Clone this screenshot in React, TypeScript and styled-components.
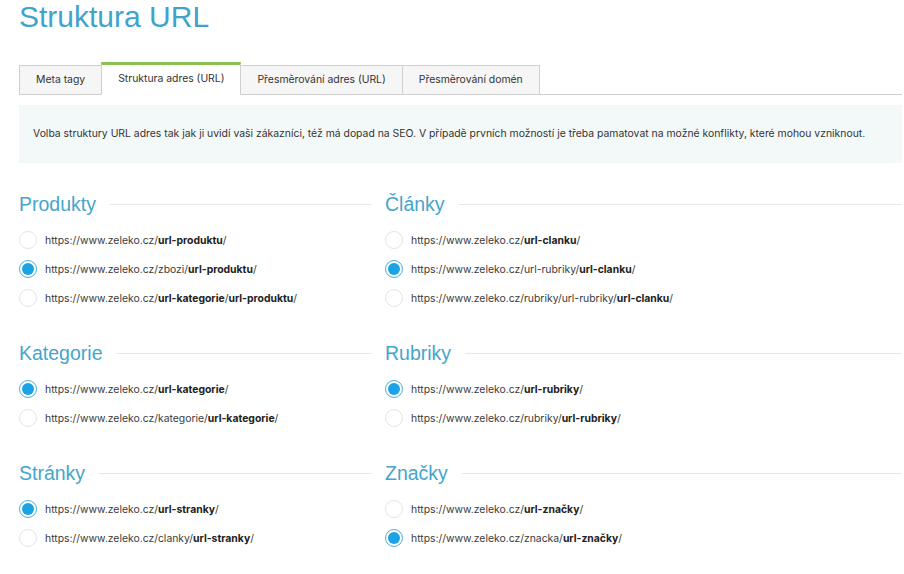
import React from "react";
import styled, { createGlobalStyle } from "styled-components";

const Global = createGlobalStyle`
  html, body { margin: 0; padding: 0; background: #fff; }
  body { font-family: Inter, "Noto Sans", sans-serif; color: #333; }
`;

const Page = styled.div`
  width: 883px;
  padding-left: 19px;
`;

const Title = styled.h1`
  margin: 0;
  font-family: "Liberation Sans", Arial, sans-serif;
  font-weight: 400;
  font-size: 30px;
  line-height: 34px;
  color: #3fa3cb;
`;

const TabBar = styled.div`
  display: flex;
  align-items: flex-end;
  margin-top: 28px;
  border-bottom: 1px solid #cfcfcf;
`;

const Tab = styled.div<{ $active?: boolean }>`
  box-sizing: border-box;
  margin-bottom: -1px;
  margin-left: -1px;
  &:first-child { margin-left: 0; }
  padding: 0 16px;
  height: ${(p) => (p.$active ? "33px" : "30px")};
  line-height: 28px;
  font-size: 10.4px;
  color: #333;
  white-space: nowrap;
  background: ${(p) => (p.$active ? "#fff" : "#f6f6f6")};
  border: 1px solid #cfcfcf;
  border-top: ${(p) => (p.$active ? "3px solid #8cc152" : "1px solid #cfcfcf")};
  border-bottom-color: ${(p) => (p.$active ? "#fff" : "#cfcfcf")};
  position: relative;
  z-index: ${(p) => (p.$active ? 1 : 0)};
`;

const Info = styled.div`
  margin-top: 10px;
  background: #f3f9f9;
  padding: 21px 14px;
  font-size: 10.4px;
  line-height: 16px;
  color: #333;
  white-space: nowrap;
`;

const Columns = styled.div`
  display: grid;
  grid-template-columns: 353px 1fr;
  column-gap: 13px;
  margin-top: 29px;
`;

const Column = styled.div`
  display: flex;
  flex-direction: column;
  gap: 34px;
`;

const Section = styled.section`
  display: flex;
  flex-direction: column;
`;

const HeadingRow = styled.div`
  display: flex;
  align-items: center;
  gap: 14px;
  height: 24px;
  margin-bottom: 15px;
  &::after {
    content: "";
    flex: 1;
    height: 1px;
    background: #e6e9ea;
  }
`;

const Heading = styled.h2`
  margin: 0;
  font-family: "Liberation Sans", Arial, sans-serif;
  font-weight: 400;
  font-size: 19.5px;
  line-height: 24px;
  color: #45a5cc;
`;

const Options = styled.div`
  display: flex;
  flex-direction: column;
  gap: 11px;
`;

const Option = styled.label`
  display: flex;
  align-items: center;
  gap: 8px;
  height: 18px;
  font-size: 10.4px;
  color: #3a3a3a;
  cursor: pointer;
  b { font-weight: 700; color: #222; }
`;

const Radio = styled.span<{ $checked?: boolean }>`
  box-sizing: border-box;
  width: 18px;
  height: 18px;
  border-radius: 50%;
  flex: none;
  background: #fff;
  border: 1px solid ${(p) => (p.$checked ? "#4bb0dc" : "#e2e4e6")};
  display: flex;
  align-items: center;
  justify-content: center;
  &::after {
    content: "";
    width: 12px;
    height: 12px;
    border-radius: 50%;
    background: ${(p) => (p.$checked ? "#1ba3e6" : "transparent")};
  }
`;

type Opt = { parts: [string, boolean][]; checked?: boolean };
type Sec = { title: string; options: Opt[] };

const base = "https://www.zeleko.cz/";

const left: Sec[] = [
  {
    title: "Produkty",
    options: [
      { parts: [[base, false], ["url-produktu", true], ["/", false]] },
      { parts: [[base + "zbozi/", false], ["url-produktu", true], ["/", false]], checked: true },
      { parts: [[base, false], ["url-kategorie", true], ["/", false], ["url-produktu", true], ["/", false]] },
    ],
  },
  {
    title: "Kategorie",
    options: [
      { parts: [[base, false], ["url-kategorie", true], ["/", false]], checked: true },
      { parts: [[base + "kategorie/", false], ["url-kategorie", true], ["/", false]] },
    ],
  },
  {
    title: "Stránky",
    options: [
      { parts: [[base, false], ["url-stranky", true], ["/", false]], checked: true },
      { parts: [[base + "clanky/", false], ["url-stranky", true], ["/", false]] },
    ],
  },
];

const right: Sec[] = [
  {
    title: "Články",
    options: [
      { parts: [[base, false], ["url-clanku", true], ["/", false]] },
      { parts: [[base + "url-rubriky/", false], ["url-clanku", true], ["/", false]], checked: true },
      { parts: [[base + "rubriky/url-rubriky/", false], ["url-clanku", true], ["/", false]] },
    ],
  },
  {
    title: "Rubriky",
    options: [
      { parts: [[base, false], ["url-rubriky", true], ["/", false]], checked: true },
      { parts: [[base + "rubriky/", false], ["url-rubriky", true], ["/", false]] },
    ],
  },
  {
    title: "Značky",
    options: [
      { parts: [[base, false], ["url-značky", true], ["/", false]] },
      { parts: [[base + "znacka/", false], ["url-značky", true], ["/", false]], checked: true },
    ],
  },
];

const renderColumn = (secs: Sec[]) => (
  <Column>
    {secs.map((s) => (
      <Section key={s.title}>
        <HeadingRow>
          <Heading>{s.title}</Heading>
        </HeadingRow>
        <Options>
          {s.options.map((o, i) => (
            <Option key={i}>
              <Radio $checked={o.checked} />
              <span>
                {o.parts.map(([t, bold], j) => (bold ? <b key={j}>{t}</b> : <React.Fragment key={j}>{t}</React.Fragment>))}
              </span>
            </Option>
          ))}
        </Options>
      </Section>
    ))}
  </Column>
);

export default function App() {
  return (
    <Page>
      <Global />
      <Title>Struktura URL</Title>
      <TabBar>
        <Tab>Meta tagy</Tab>
        <Tab $active>Struktura adres (URL)</Tab>
        <Tab>Přesměrování adres (URL)</Tab>
        <Tab>Přesměrování domén</Tab>
      </TabBar>
      <Info>
        Volba struktury URL adres tak jak ji uvidí vaši zákazníci, též má dopad na SEO. V případě prvních možností je třeba pamatovat na možné konflikty, které mohou vzniknout.
      </Info>
      <Columns>
        {renderColumn(left)}
        {renderColumn(right)}
      </Columns>
    </Page>
  );
}
